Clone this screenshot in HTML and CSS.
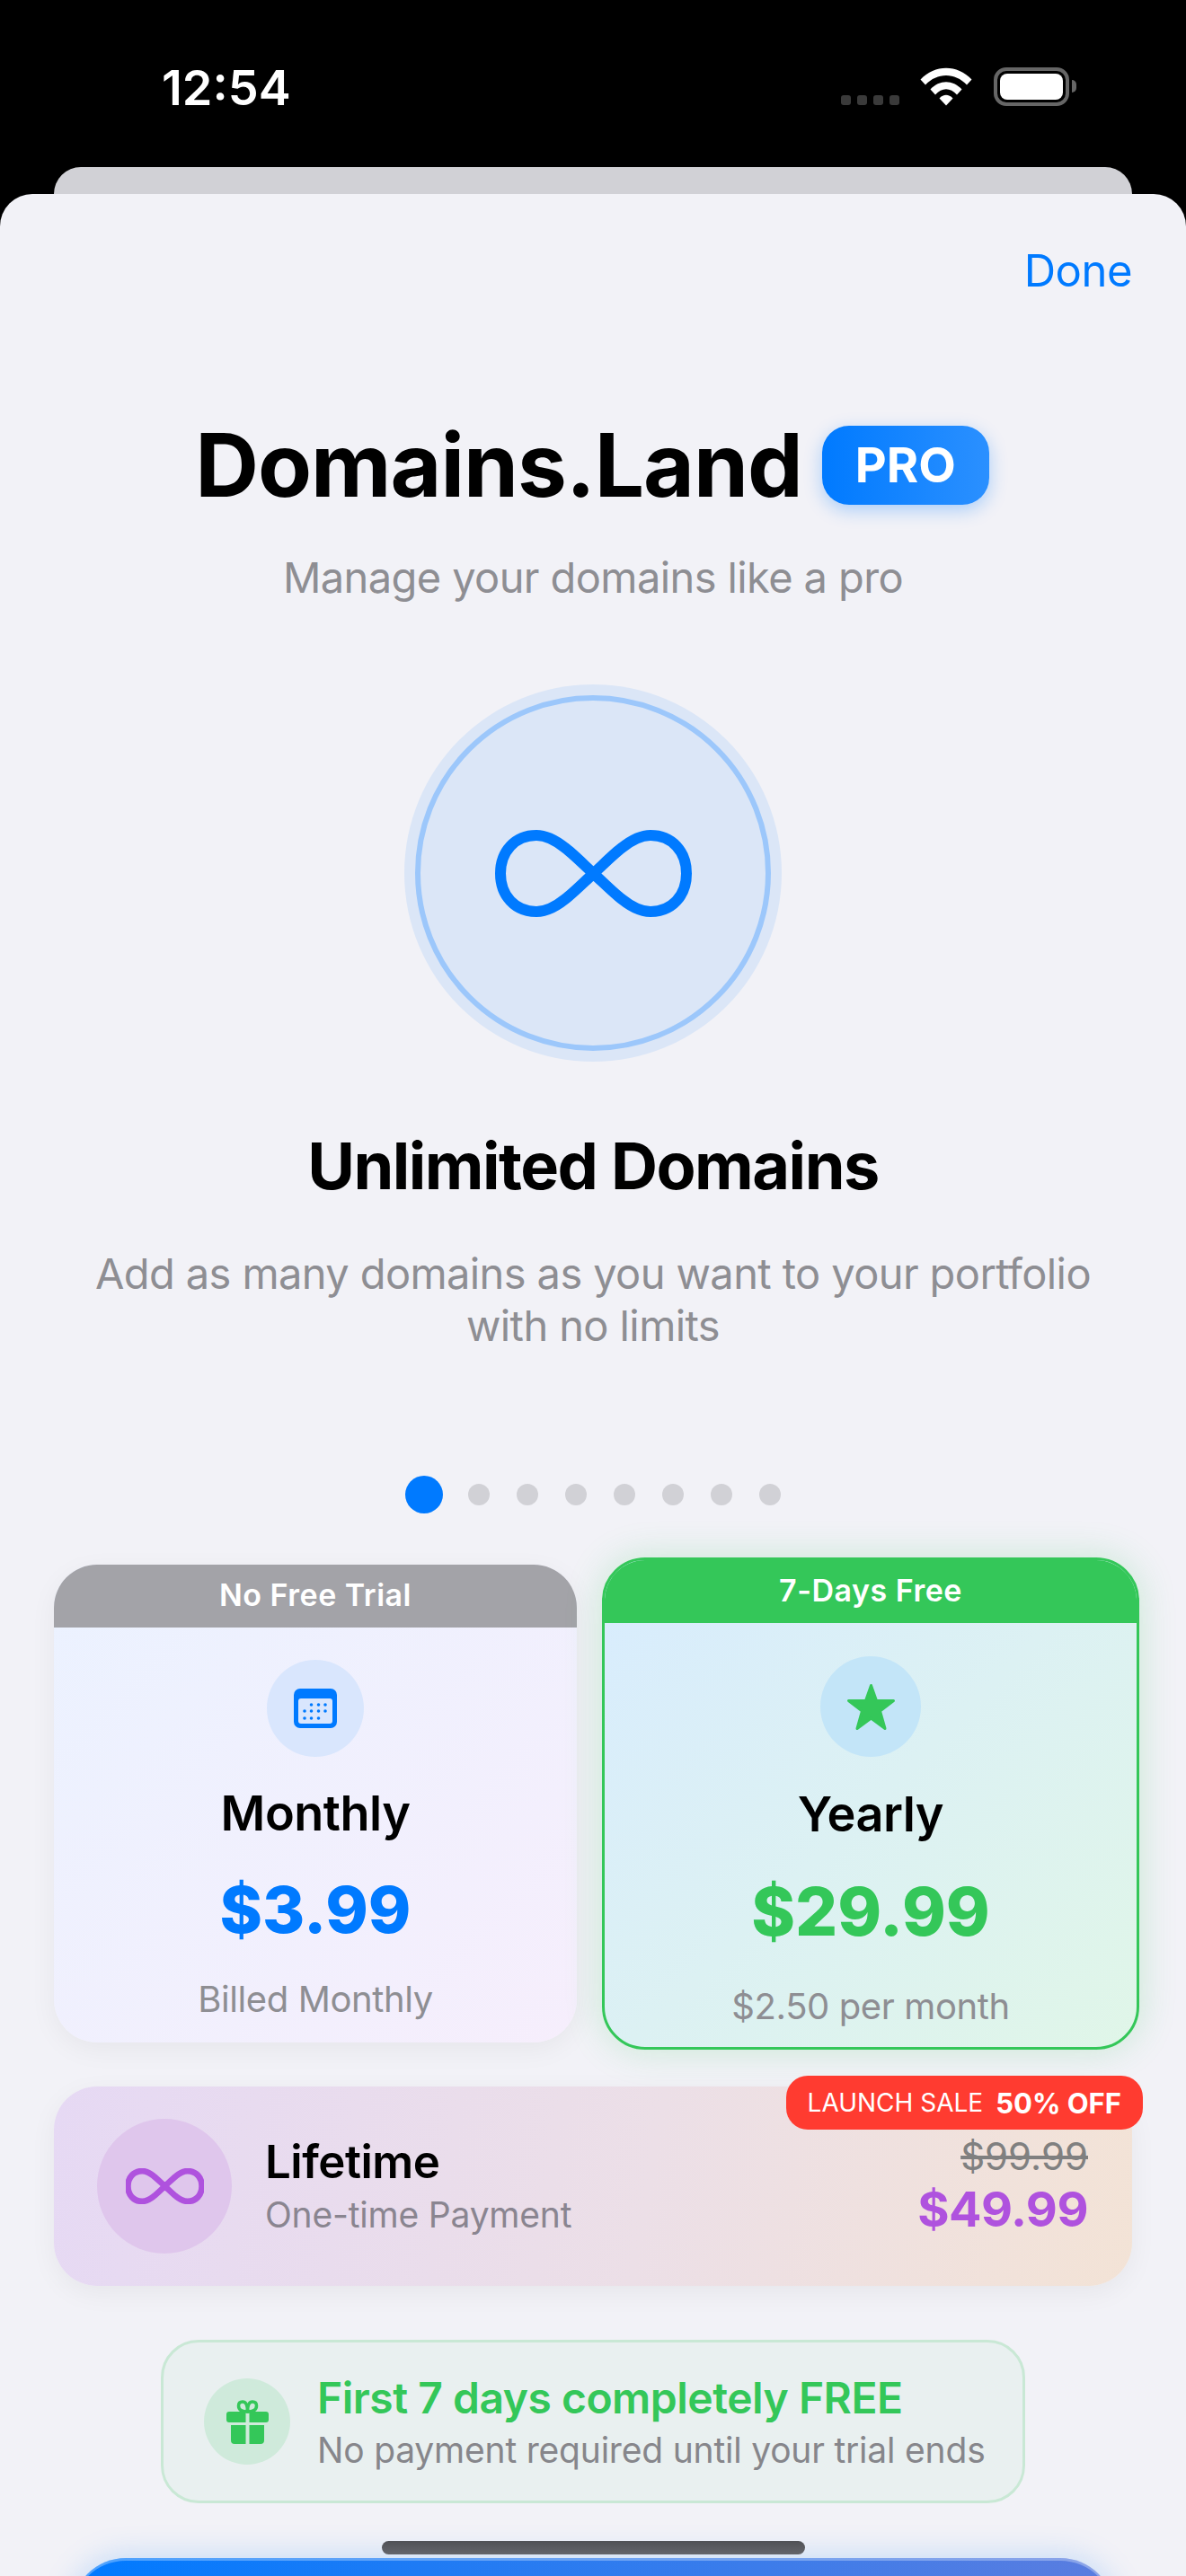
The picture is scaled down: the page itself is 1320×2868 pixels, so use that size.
FILE: index.html
```html
<!DOCTYPE html>
<html>
<head>
    <meta charset="utf-8" />
    <meta name="viewport" content="width=device-width, initial-scale=1.0">
    <title>Domains.Land PRO</title>
    <link rel="stylesheet" href="styles.css">
</head>
<body>
    <div class="status-bar">
        <div class="time">12:54</div>
        <div class="status-icons">
            <div class="signal"><span></span><span></span><span></span><span></span></div>
            <svg class="wifi" width="58" height="43" viewBox="0 0 58 43">
                <path d="M0.5 13.5C16.5 -3.5 41.5 -3.5 57.5 13.5L52 19.5C39 5.5 19 5.5 6 19.5Z" fill="#fff"/>
                <path d="M11.5 24.500C21.500 13.500 36.500 13.500 46.500 24.500L41 30.500C33.500 22 24.500 22 17 30.500Z" fill="#fff"/>
                <path d="M21.500 34.500C26 29.500 32 29.500 36.500 34.500L29 42.500Z" fill="#fff"/>
            </svg>
            <div class="battery"><div class="battery-fill"></div></div>
            <div class="battery-tip"></div>
        </div>
    </div>
    <div class="back-sheet"></div>

    <div class="sheet">
        <div class="done-row"><span class="done">Done</span></div>

        <div class="title-row">
            <h1 class="title">Domains.Land</h1>
            <span class="pro">PRO</span>
        </div>
        <div class="subtitle">Manage your domains like a pro</div>

        <div class="hero-circle">
            <div class="hero-ring">
                <svg width="219" height="97" viewBox="0 0 219 97">
                    <path class="inf inf-blue" d="M109.500 48.500C95 35 85 25 78 20C68 12 58 6 46 6C22 6 6 24 6 48.500C6 73 22 91 46 91C58 91 68 85 78 77C85 72 95 62 109.500 48.500C124 35 134 25 141 20C151 12 161 6 173 6C197 6 213 24 213 48.500C213 73 197 91 173 91C161 91 151 85 141 77C134 72 124 62 109.500 48.500Z"/>
                </svg>
            </div>
        </div>

        <h2 class="feature-title">Unlimited Domains</h2>
        <p class="feature-desc">Add as many domains as you want to your portfolio<br>with no limits</p>

        <div class="dots">
            <span class="dot dot-active"></span>
            <span class="dot"></span>
            <span class="dot"></span>
            <span class="dot"></span>
            <span class="dot"></span>
            <span class="dot"></span>
            <span class="dot"></span>
            <span class="dot"></span>
        </div>

        <div class="plans">
            <div class="plan plan-monthly">
                <div class="plan-head">No Free Trial</div>
                <div class="plan-icon">
                    <svg width="48" height="44" viewBox="0 0 48 44">
                        <rect width="48" height="44" rx="7" fill="#007aff"/>
                        <rect x="5" y="11" width="38" height="28" rx="3" fill="#d9e6fd"/>
                        <g fill="#007aff">
                            <circle cx="19.500" cy="18" r="1.800"/><circle cx="27.500" cy="18" r="1.800"/><circle cx="35" cy="18" r="1.800"/>
                            <circle cx="12" cy="25" r="1.800"/><circle cx="19.500" cy="25" r="1.800"/><circle cx="27.500" cy="25" r="1.800"/><circle cx="35" cy="25" r="1.800"/>
                            <circle cx="12" cy="33" r="1.800"/><circle cx="19.500" cy="33" r="1.800"/><circle cx="27.500" cy="33" r="1.800"/>
                        </g>
                    </svg>
                </div>
                <div class="plan-name">Monthly</div>
                <div class="plan-price">$3.99</div>
                <div class="plan-note">Billed Monthly</div>
            </div>

            <div class="plan plan-yearly">
                <div class="plan-head">7-Days Free</div>
                <div class="plan-icon">
                    <svg width="55" height="53" viewBox="0 0 55 53">
                        <path d="M27.500 2.500L33.500 19.500H52.500L37.500 31L43 50.500L27.500 39L12 50.500L17.500 31L2.500 19.500H21.500Z" fill="#34c759" stroke="#34c759" stroke-width="3" stroke-linejoin="round"/>
                    </svg>
                </div>
                <div class="plan-name">Yearly</div>
                <div class="plan-price">$29.99</div>
                <div class="plan-note">$2.50 per month</div>
            </div>
        </div>

        <div class="lifetime">
            <div class="sale-badge"><span class="sale-label">LAUNCH SALE</span><span class="sale-off">50% OFF</span></div>
            <div class="lifetime-icon">
                <svg width="87" height="40" viewBox="0 0 219 97">
                    <path class="inf inf-purple" d="M109.500 48.500C95 35 85 25 78 20C68 12 58 6 46 6C22 6 6 24 6 48.500C6 73 22 91 46 91C58 91 68 85 78 77C85 72 95 62 109.500 48.500C124 35 134 25 141 20C151 12 161 6 173 6C197 6 213 24 213 48.500C213 73 197 91 173 91C161 91 151 85 141 77C134 72 124 62 109.500 48.500Z"/>
                </svg>
            </div>
            <div class="lifetime-text">
                <div class="lifetime-name">Lifetime</div>
                <div class="lifetime-note">One-time Payment</div>
            </div>
            <div class="lifetime-prices">
                <div class="price-old">$99.99</div>
                <div class="price-new">$49.99</div>
            </div>
        </div>

        <div class="trial">
            <div class="trial-icon">
                <svg width="47" height="49" viewBox="0 0 47 49">
                    <g fill="none" stroke="#34c759" stroke-width="3.500">
                        <path d="M23.500 13C17 13 13.500 10.500 13.500 6.500C13.500 3.500 15.500 2 18 2C21.500 2 23.500 6 23.500 13Z"/>
                        <path d="M23.500 13C30 13 33.500 10.500 33.500 6.500C33.500 3.500 31.500 2 29 2C25.500 2 23.500 6 23.500 13Z"/>
                    </g>
                    <path d="M3 13H21.500V25H3Q0 25 0 22V16Q0 13 3 13ZM25.500 13H44Q47 13 47 16V22Q47 25 44 25H25.500Z" fill="#34c759"/>
                    <path d="M5 28H21.500V49H9Q5 49 5 45ZM25.500 28H42V45Q42 49 38 49H25.500Z" fill="#34c759"/>
                </svg>
            </div>
            <div>
                <div class="trial-title">First 7 days completely FREE</div>
                <div class="trial-note">No payment required until your trial ends</div>
            </div>
        </div>
    </div>

    <div class="subscribe-btn"></div>
    <div class="home-indicator"></div>
</body>
</html>
```
FILE: styles.css
```css
* {
    box-sizing: border-box;
}
html, body {
    margin: 0;
    padding: 0;
}
body {
    position: relative;
    width: 1320px;
    height: 2868px;
    overflow: hidden;
    background: #000;
    font-family: "Inter", "Liberation Sans", sans-serif;
    color: #000;
}

/* status bar */
.status-bar {
    height: 186px;
    display: flex;
    justify-content: space-between;
    padding: 64px 122px 0 180px;
}
.time {
    color: #fff;
    font-size: 54px;
    font-weight: 600;
    line-height: 68px;
}
.status-icons {
    display: flex;
    align-items: flex-start;
    padding-top: 11px;
}
.signal {
    display: flex;
    gap: 7px;
    margin: 31px 23px 0 0;
}
.signal span {
    width: 11px;
    height: 11px;
    border-radius: 3px;
    background: #3a3a3a;
}
.wifi {
    margin-right: 24px;
}
.battery {
    width: 84px;
    height: 43px;
    border: 4px solid #666;
    border-radius: 14px;
    padding: 3px;
}
.battery-fill {
    height: 100%;
    background: #fff;
    border-radius: 8px;
}
.battery-tip {
    width: 5px;
    height: 14px;
    margin: 14px 0 0 3px;
    background: #666;
    border-radius: 0 5px 5px 0;
}
.back-sheet {
    height: 30px;
    margin: 0 60px;
    background: #d1d1d6;
    border-radius: 30px 30px 0 0;
}

/* sheet */
.sheet {
    height: 2652px;
    background: #f2f2f7;
    border-radius: 36px 36px 0 0;
    padding-top: 56px;
}
.done-row {
    display: flex;
    justify-content: flex-end;
    padding-right: 60px;
    height: 60px;
}
.done {
    color: #007aff;
    font-size: 49px;
    line-height: 60px;
    letter-spacing: -0.5px;
}
.title-row {
    display: flex;
    justify-content: center;
    align-items: center;
    gap: 22px;
    height: 120px;
    margin-top: 126px;
    padding-right: 2px;
}
.title {
    margin: 0;
    font-size: 98px;
    font-weight: 700;
    line-height: 120px;
    letter-spacing: -1px;
}
.pro {
    width: 186px;
    height: 88px;
    border-radius: 30px;
    background: linear-gradient(90deg, #007aff, #2b90ff);
    box-shadow: 0 6px 20px rgba(0, 122, 255, 0.3);
    color: #fff;
    font-size: 54px;
    font-weight: 700;
    line-height: 88px;
    text-align: center;
}
.subtitle {
    margin-top: 35px;
    color: #8e8e93;
    font-size: 47px;
    line-height: 60px;
    letter-spacing: -0.6px;
    text-align: center;
}
.hero-circle {
    width: 420px;
    height: 420px;
    margin: 89px auto 0;
    padding: 12px;
    border-radius: 50%;
    background: #dbe6f7;
}
.hero-ring {
    width: 396px;
    height: 396px;
    border: 6px solid #9cc7fb;
    border-radius: 50%;
    display: flex;
    align-items: center;
    justify-content: center;
}
.inf {
    fill: none;
    stroke-linejoin: round;
}
.inf-blue {
    stroke: #007aff;
    stroke-width: 12;
}
.inf-purple {
    stroke: #af52de;
    stroke-width: 17;
}
.feature-title {
    margin: 71px 0 0;
    font-size: 72px;
    font-weight: 700;
    line-height: 90px;
    letter-spacing: -1.5px;
    text-align: center;
}
.feature-desc {
    margin: 46px 0 0;
    color: #8e8e93;
    font-size: 47px;
    line-height: 58px;
    letter-spacing: -0.6px;
    text-align: center;
}
.dots {
    display: flex;
    align-items: center;
    justify-content: center;
    gap: 30px;
    height: 42px;
    margin-top: 138px;
}
.dot {
    width: 24px;
    height: 24px;
    border-radius: 50%;
    background: #d1d1d6;
}
.dot-active {
    width: 42px;
    height: 42px;
    background: #007aff;
    margin-right: -2px;
}

/* plan cards */
.plans {
    display: grid;
    grid-template-columns: 582px 598px;
    gap: 28px;
    align-items: center;
    margin-top: 49px;
    padding-left: 60px;
}
.plan {
    display: flex;
    flex-direction: column;
    align-items: center;
    border-radius: 48px;
    overflow: hidden;
}
.plan-head {
    width: 100%;
    height: 70px;
    color: #fff;
    font-size: 34px;
    font-weight: 600;
    line-height: 68px;
    letter-spacing: 0.5px;
    text-align: center;
}
.plan-icon {
    border-radius: 50%;
    display: flex;
    align-items: center;
    justify-content: center;
}
.plan-name {
    font-size: 54px;
    font-weight: 600;
    line-height: 70px;
    letter-spacing: -0.5px;
}
.plan-price {
    font-weight: 800;
    line-height: 90px;
}
.plan-note {
    color: #8e8e93;
    font-size: 40px;
    line-height: 50px;
    letter-spacing: -0.4px;
}
.plan-monthly {
    height: 532px;
    background: linear-gradient(135deg, #ebf2ff, #f6eefc);
    box-shadow: 0 8px 30px rgba(0, 0, 0, 0.05);
}
.plan-monthly .plan-head {
    background: #a3a3a8;
}
.plan-monthly .plan-icon {
    width: 108px;
    height: 108px;
    margin-top: 36px;
    background: #d9e6fd;
}
.plan-monthly .plan-name {
    margin-top: 28px;
}
.plan-monthly .plan-price {
    margin-top: 27px;
    color: #007aff;
    font-size: 72px;
}
.plan-monthly .plan-note {
    margin-top: 30px;
}
.plan-yearly {
    height: 548px;
    border: 3px solid #34c759;
    background: linear-gradient(135deg, #d8ecfe, #e0f6e8);
    box-shadow: 0 0 40px rgba(52, 199, 89, 0.22);
}
.plan-yearly .plan-head {
    background: #34c759;
}
.plan-yearly .plan-icon {
    width: 112px;
    height: 112px;
    margin-top: 37px;
    background: #c3e5f8;
}
.plan-yearly .plan-name {
    margin-top: 29px;
}
.plan-yearly .plan-price {
    margin-top: 28px;
    color: #34c759;
    font-size: 74px;
}
.plan-yearly .plan-note {
    margin-top: 36px;
}

/* lifetime */
.lifetime {
    position: relative;
    display: flex;
    align-items: center;
    height: 222px;
    margin: 41px 60px 0;
    padding: 0 49px 0 48px;
    border-radius: 48px;
    background: linear-gradient(100deg, #e6d9f4, #ecdfe7 55%, #f3e3d6);
    box-shadow: 0 8px 30px rgba(0, 0, 0, 0.05);
}
.sale-badge {
    position: absolute;
    top: -12px;
    right: -12px;
    display: flex;
    align-items: center;
    gap: 14px;
    height: 60px;
    padding: 0 24px;
    border-radius: 24px;
    background: #ff3b30;
    color: #fff;
}
.sale-label {
    font-size: 28px;
}
.sale-off {
    font-size: 31px;
    font-weight: 700;
}
.lifetime-icon {
    flex: none;
    width: 150px;
    height: 150px;
    border-radius: 50%;
    background: #dfc6ec;
    display: flex;
    align-items: center;
    justify-content: center;
}
.lifetime-text {
    margin-left: 37px;
    flex: 1;
}
.lifetime-name {
    font-size: 51px;
    font-weight: 600;
    line-height: 62px;
    letter-spacing: -0.5px;
}
.lifetime-note {
    color: #8a8590;
    font-size: 39px;
    line-height: 52px;
    letter-spacing: -0.2px;
    margin-top: 2px;
}
.lifetime-prices {
    text-align: right;
    padding-top: 2px;
}
.price-old {
    color: #808080;
    font-size: 42px;
    line-height: 50px;
    text-decoration: line-through;
}
.price-new {
    color: #af52de;
    font-size: 54px;
    font-weight: 700;
    line-height: 68px;
    letter-spacing: -0.5px;
}

/* free trial box */
.trial {
    display: flex;
    align-items: center;
    gap: 30px;
    height: 182px;
    margin: 60px 179px 0;
    padding: 3px 0 0 45px;
    border: 3px solid #c9e8d5;
    border-radius: 42px;
    background: #e9f0f0;
}
.trial-icon {
    flex: none;
    width: 96px;
    height: 96px;
    margin-top: -3px;
    border-radius: 50%;
    background: #cfeadb;
    display: flex;
    align-items: center;
    justify-content: center;
}
.trial-title {
    color: #34c759;
    font-size: 48px;
    font-weight: 600;
    line-height: 60px;
    letter-spacing: -0.5px;
}
.trial-note {
    color: #86868b;
    font-size: 39px;
    line-height: 56px;
    letter-spacing: -0.2px;
}

/* things pinned over the bottom of the sheet */
.subscribe-btn {
    position: absolute;
    left: 80px;
    right: 80px;
    top: 2848px;
    height: 120px;
    border-radius: 60px 60px 0 0;
    background: linear-gradient(90deg, #007aff, #5b7ddf);
    box-shadow: inset 0 3px 0 rgba(255, 255, 255, 0.3), 0 0 36px rgba(0, 122, 255, 0.22);
}
.home-indicator {
    position: absolute;
    left: 425px;
    top: 2829px;
    width: 471px;
    height: 15px;
    border-radius: 8px;
    background: linear-gradient(180deg, #505156, #64656b);
}
```
